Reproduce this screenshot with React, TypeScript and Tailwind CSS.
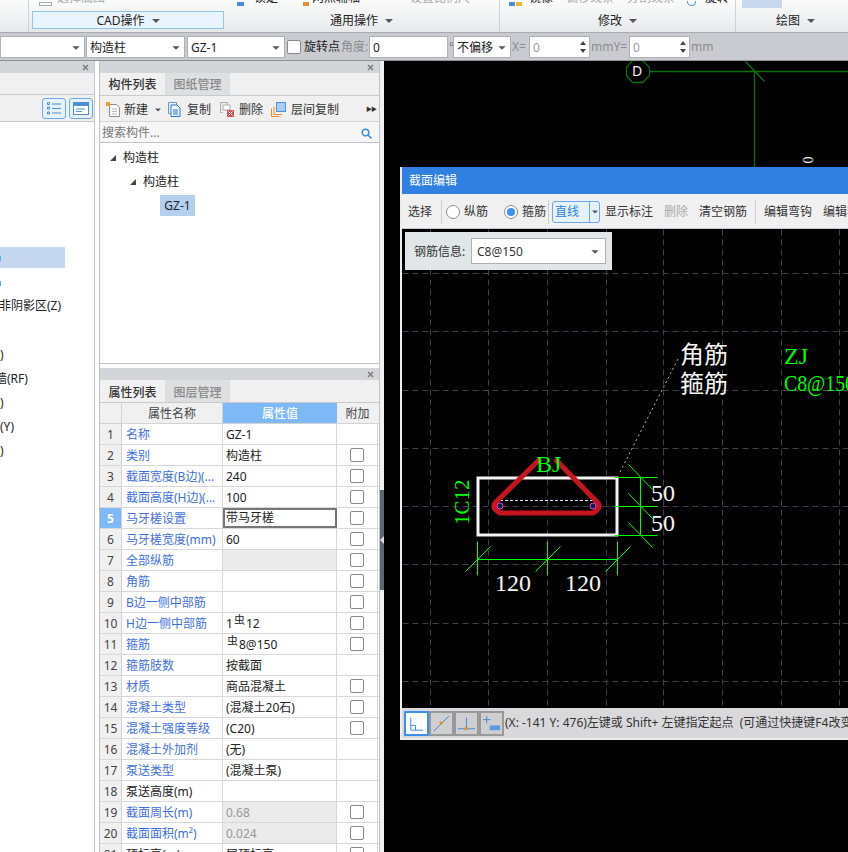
import type { ReactNode } from 'react'

const sans = "[font-family:'Noto_Sans','Noto_Sans_CJK_SC',sans-serif]"

const rows: { name: string; value?: ReactNode; check?: boolean; gray?: boolean; grayText?: boolean; black?: boolean }[] = [
  { name: '名称', value: 'GZ-1' },
  { name: '类别', value: '构造柱', check: true },
  { name: '截面宽度(B边)(...', value: '240', check: true },
  { name: '截面高度(H边)(...', value: '100', check: true },
  { name: '马牙槎设置', value: '带马牙槎', check: true },
  { name: '马牙槎宽度(mm)', value: '60', check: true },
  { name: '全部纵筋', gray: true, check: true },
  { name: '角筋', check: true },
  { name: 'B边一侧中部筋', check: true },
  { name: 'H边一侧中部筋', value: <>1 <Rebar />12</>, check: true },
  { name: '箍筋', value: <><Rebar />8@150</>, check: true },
  { name: '箍筋肢数', value: '按截面' },
  { name: '材质', value: '商品混凝土', check: true },
  { name: '混凝土类型', value: '(混凝土20石)', check: true },
  { name: '混凝土强度等级', value: '(C20)', check: true },
  { name: '混凝土外加剂', value: '(无)' },
  { name: '泵送类型', value: '(混凝土泵)' },
  { name: '泵送高度(m)', black: true },
  { name: '截面周长(m)', value: '0.68', gray: true, grayText: true, check: true },
  { name: '截面面积(m²)', value: '0.024', gray: true, grayText: true, check: true },
  { name: '顶标高(m)', value: '层顶标高', check: true, black: true },
]

function Rebar() {
  return <span className="relative top-[-3px] mx-[1px] text-[11px]">虫</span>
}

function Caret({ className = '' }: { className?: string }) {
  return <span className={`inline-block h-0 w-0 border-x-[4px] border-t-[4px] border-x-transparent border-t-[#555] ${className}`} />
}

function CloseX() {
  return (
    <svg width="7" height="7" viewBox="0 0 7 7" className="shrink-0">
      <path d="M1 1l5 5M6 1L1 6" stroke="#7d8085" strokeWidth="1.6" />
    </svg>
  )
}

function RibbonLabel({ text }: { text: string }) {
  return (
    <span className="flex items-center gap-[7px] pt-[2px] text-[12px] leading-[16px] text-[#222]">
      {text}
      <Caret />
    </span>
  )
}

function Ribbon() {
  const clip = 'flex h-[6px] items-end overflow-hidden text-[12px] leading-[16px] whitespace-nowrap'
  return (
    <div className="flex h-[33px] shrink-0 border-b border-[#a9acb1] bg-gradient-to-b from-[#fbfbfb] to-[#e7e9eb]">
      <div className="w-[29px] shrink-0 border-r border-[#cfd1d4]" />
      <div className="flex w-[195px] shrink-0 flex-col pl-[3px]">
        <div className={`${clip} pl-[7px] text-[#aaa]`}>
          <span className="mr-[5px] h-[4px] w-[13px] border border-[#aaa]" />选择底图
        </div>
        <div className="mt-[5px] flex h-[18px] items-center justify-center border border-[#8fc3f5] bg-[#e9f4fe]">
          <RibbonLabel text="CAD操作" />
        </div>
      </div>
      <div className="flex w-[276px] shrink-0 flex-col border-r border-[#cfd1d4]">
        <div className={`${clip} pl-[13px] text-[#222]`}>
          <span className="mr-[10px] h-[4px] w-[7px] bg-[#4a90d9]" />锁定
          <span className="mr-[3px] ml-[25px] h-[4px] w-[6px] bg-[#e98b3a]" />两点辅轴
          <span className="ml-[50px] text-[#aaa]">设置比例尺</span>
        </div>
        <div className="mt-[5px] flex h-[18px] items-center justify-center">
          <RibbonLabel text="通用操作" />
        </div>
      </div>
      <div className="flex w-[236px] shrink-0 flex-col border-r border-[#cfd1d4]">
        <div className={`${clip} pl-[9px] text-[#222]`}>
          <span className="h-[4px] w-[6px] bg-[#4a90d9]" />
          <span className="mr-[7px] ml-[1px] h-[4px] w-[6px] bg-[#f2b233]" />镜像
          <span className="ml-[13px] text-[#aaa]">偏移线条</span>
          <span className="ml-[13px] text-[#aaa]">分割线条</span>
          <span className="mr-[9px] ml-[12px] h-[5px] w-[9px] rounded-b-full border border-t-0 border-[#4a90d9]" />旋转
        </div>
        <div className="mt-[5px] flex h-[18px] items-center justify-center">
          <RibbonLabel text="修改" />
        </div>
      </div>
      <div className="flex flex-1 flex-col pl-[6px]">
        <div className="h-[8px] w-[40px] bg-[#c8d8ef]" />
        <div className="mt-[3px] flex h-[18px] items-center pl-[34px]">
          <RibbonLabel text="绘图" />
        </div>
      </div>
    </div>
  )
}

function Select({ text, className }: { text: string; className: string }) {
  return (
    <div className={`flex h-[22px] items-center justify-between border border-[#adb0b4] bg-white pt-[1px] pr-[4px] pl-[3px] ${className}`}>
      <span>{text}</span>
      <Caret className="scale-90" />
    </div>
  )
}

function Spin({ className }: { className: string }) {
  return (
    <div className={`flex h-[22px] items-center justify-between border border-[#adb0b4] bg-white pr-[3px] pl-[3px] text-[#999] ${className}`}>
      <span className="pt-[1px]">0</span>
      <span className="flex flex-col gap-[4px]">
        <span className="h-0 w-0 border-x-[3px] border-b-[4px] border-x-transparent border-b-[#444]" />
        <span className="h-0 w-0 border-x-[3px] border-t-[4px] border-x-transparent border-t-[#444]" />
      </span>
    </div>
  )
}

function OptionBar() {
  return (
    <div className="flex h-[28px] shrink-0 items-center border-b border-[#8f9297] bg-[#c9cbd0] pt-[1px] text-[12px] whitespace-nowrap text-[#222] *:shrink-0">
      <Select text="" className="w-[85px]" />
      <Select text="构造柱" className="ml-[1px] w-[99px]" />
      <Select text="GZ-1" className="ml-[2px] w-[98px]" />
      <span className="ml-[2px] h-[14px] w-[14px] rounded-[2px] border border-[#8a8a8a] bg-white" />
      <span className="ml-[3px] w-[37px]">旋转点</span>
      <span className="w-[28px] text-[#8b8d91]">角度:</span>
      <div className="ml-[0px] flex h-[22px] w-[79px] items-center border border-[#adb0b4] bg-white pt-[1px] pl-[3px]">0</div>
      <span className="ml-[1px] w-[4px] text-[#777]">°</span>
      <Select text="不偏移" className="w-[58px]" />
      <span className="ml-[1px] w-[16px] text-[#8b8d91]">X=</span>
      <Spin className="ml-[1px] w-[61px]" />
      <span className="ml-[1px] w-[36px] text-[#8b8d91]">mmY=</span>
      <Spin className="ml-[2px] w-[61px]" />
      <span className="ml-[1px] text-[#8b8d91]">mm</span>
    </div>
  )
}

function LeftPanel() {
  return (
    <div className="flex w-[99px] shrink-0 border-r-[4px] border-r-white bg-white text-[12px] text-[#222]">
      <div className="flex w-[95px] flex-col overflow-hidden border-r border-[#c6c7cb]">
        <div className="flex h-[12px] shrink-0 items-center justify-end bg-[#d3d5d9] pr-[5px]"><CloseX /></div>
        <div className="h-[22px] shrink-0 border-b border-[#c9cacd] bg-[#f0f0f0]" />
        <div className="flex h-[27px] shrink-0 items-center justify-end gap-[3px] border-b border-[#c9cacd] bg-[#f0f0f0] pr-[1px]">
          <div className="flex h-[21px] w-[24px] items-center justify-center rounded-[3px] border border-[#6aa9ea] bg-[#e6f1fc]">
            <svg width="14" height="13" viewBox="0 0 14 13" fill="none" stroke="#4a90d9">
              <path d="M5 2h9M5 6.500h9M5 11h9" />
              <path d="M.5.500h2v2h-2zM.5 5h2v2h-2zM.5 10h2v2h-2z" />
            </svg>
          </div>
          <div className="flex h-[21px] w-[24px] items-center justify-center rounded-[3px] border border-[#6aa9ea] bg-[#e6f1fc]">
            <svg width="16" height="13" viewBox="0 0 16 13">
              <rect x=".5" y=".5" width="15" height="12" fill="#fff" stroke="#4a90d9" />
              <rect x="0" y="0" width="16" height="4" fill="#4a90d9" />
              <path d="M3 7h9M3 9.500h6" stroke="#4a90d9" />
            </svg>
          </div>
        </div>
        <div className="relative flex-1 whitespace-nowrap">
          <div className="absolute top-[125px] left-0 h-[21px] w-[65px] bg-[#c5d8f0]" />
          <div className="absolute top-[134px] left-0 h-[5px] w-[1px] bg-[#4fb0f0]" />
          <div className="absolute top-[159px] left-0 h-[5px] w-[1px] bg-[#4fb0f0]" />
          <span className="absolute top-[176px] left-0 leading-[16px]"><span className="-ml-[1px]">非阴影区(Z)</span></span>
          <span className="absolute top-[225px] left-0 leading-[16px]">)</span>
          <span className="absolute top-[249px] left-0 leading-[16px]"><span className="-ml-[5px]">墙(RF)</span></span>
          <span className="absolute top-[273px] left-0 leading-[16px]">)</span>
          <span className="absolute top-[297px] left-0 leading-[16px]"><span>(Y)</span></span>
          <span className="absolute top-[321px] left-0 leading-[16px]">)</span>
        </div>
      </div>
    </div>
  )
}

function Tabs({ active, other, pad }: { active: string; other: string; pad: string }) {
  return (
    <div className="flex h-[23px] shrink-0 border-b border-[#c9cacd] bg-[#f0f0f0] text-[12px]">
      <span className={`flex w-[65px] items-center justify-center font-medium text-[#333] ${pad}`}>{active}</span>
      <span className={`flex w-[65px] items-center justify-center bg-[#dedfe0] font-medium text-[#8a8a8a] ${pad}`}>{other}</span>
    </div>
  )
}

function ToolIcon({ kind }: { kind: 'new' | 'copy' | 'del' | 'floor' }) {
  if (kind === 'new') {
    return (
      <svg width="15" height="15" viewBox="0 0 15 15" fill="none">
        <path d="M3.500 2.500h7l3 3v9h-10z" fill="#fafafa" stroke="#8d8d8d" />
        <path d="M6 7h5M6 9.500h5M6 12h5" stroke="#bbb" />
        <rect x="0" y="0" width="4" height="4" fill="#f0a020" />
      </svg>
    )
  }
  if (kind === 'copy') {
    return (
      <svg width="13" height="15" viewBox="0 0 13 15" fill="none">
        <path d="M.5.500h8v3" stroke="#6b93c4" />
        <path d="M.5.500v11h2" stroke="#6b93c4" />
        <path d="M3 3h6l3 3v8.500H3z" fill="#eef5fc" stroke="#2a76c6" />
        <path d="M5 8h5M5 10h5M5 12h5" stroke="#2a76c6" />
      </svg>
    )
  }
  if (kind === 'del') {
    return (
      <svg width="14" height="15" viewBox="0 0 14 15" fill="none">
        <path d="M.5.500h7v2" stroke="#aaa" />
        <path d="M.5.500v10h2" stroke="#aaa" />
        <path d="M3 3h7v5H3z" fill="#fff" stroke="#aaa" />
        <rect x="7" y="8" width="7" height="7" fill="#d9534f" />
        <path d="M8.500 9.500l4 4M12.500 9.500l-4 4" stroke="#fff" />
      </svg>
    )
  }
  return (
    <svg width="15" height="15" viewBox="0 0 15 15" fill="none">
      <rect x="5.500" y=".5" width="9" height="9" fill="#a9cdf4" stroke="#4a90d9" />
      <path d="M3 4.500v8h8M.5 6.500v8h8" stroke="#f0882a" />
    </svg>
  )
}

function ListPanel() {
  return (
    <div className="flex h-[303px] shrink-0 flex-col border-b border-[#c0c1c4]">
      <div className="flex h-[12px] shrink-0 items-center justify-end bg-[#d3d5d9] pr-[5px]"><CloseX /></div>
      <Tabs active="构件列表" other="图纸管理" pad="pt-[1px]" />
      <div className="flex h-[26px] shrink-0 items-center border-b border-[#d6d6d8] bg-[#f0f0f0] pt-[2px] pl-[6px] text-[12px] text-[#333]">
        <ToolIcon kind="new" />
        <span className="ml-[3px]">新建</span>
        <Caret className="ml-[6px] scale-75" />
        <span className="ml-[6px] flex"><ToolIcon kind="copy" /></span>
        <span className="ml-[6px]">复制</span>
        <span className="ml-[9px] flex"><ToolIcon kind="del" /></span>
        <span className="ml-[5px]">删除</span>
        <span className="ml-[8px] flex"><ToolIcon kind="floor" /></span>
        <span className="ml-[5px]">层间复制</span>
        <span className="mr-[3px] ml-auto text-[6px] tracking-[-1px] text-[#333]">▶▶</span>
      </div>
      <div className="flex h-[21px] shrink-0 items-center justify-between border-b border-[#c0c1c4] bg-[#f6f6f6] pt-[2px] pr-[7px] pl-[2px] text-[12px] text-[#777]">
        <span>搜索构件...</span>
        <svg width="11" height="11" viewBox="0 0 11 11" fill="none" stroke="#3f93dc" strokeWidth="1.6">
          <circle cx="4.500" cy="4.500" r="3.300" />
          <path d="M7 7l3.500 3.500" />
        </svg>
      </div>
      <div className="flex flex-1 flex-col gap-[3px] bg-white pt-[4px] pl-[10px] text-[12px] text-[#222]">
        <div className="flex h-[21px] items-center gap-[7px]"><TreeArrow />构造柱</div>
        <div className="ml-[20px] flex h-[21px] items-center gap-[7px]"><TreeArrow />构造柱</div>
        <div className="ml-[50px] flex h-[21px] w-[35px] items-center justify-center bg-[#b5cfee]">GZ-1</div>
      </div>
    </div>
  )
}

function TreeArrow() {
  return <span className="h-0 w-0 border-b-[6px] border-l-[6px] border-b-[#444] border-l-transparent" />
}

function PropertyPanel() {
  return (
    <div className="mt-[4px] flex flex-1 flex-col overflow-hidden">
      <div className="flex h-[12px] shrink-0 items-center justify-end bg-[#d3d5d9] pr-[5px]"><CloseX /></div>
      <Tabs active="属性列表" other="图层管理" pad="pt-[3px]" />
      <div className="grid h-[21px] shrink-0 grid-cols-[22px_101px_114px_41px] border-b border-[#d3d3d3] bg-[#f0f0f0] text-[12px] text-[#444]">
        <span className="border-r border-[#d3d3d3]" />
        <span className="flex items-center justify-center border-r border-[#d3d3d3] pt-[1px]">属性名称</span>
        <span className="flex items-center justify-center bg-[#7fb8f7] pt-[1px] font-medium text-white">属性值</span>
        <span className="flex items-center justify-center pt-[1px]">附加</span>
      </div>
      {rows.map((r, i) => {
        const sel = i === 4
        return (
          <div key={r.name} className="grid h-[21px] shrink-0 grid-cols-[22px_101px_114px_41px] border-b border-[#d8d8d8] bg-white text-[12px]">
            <span className={`flex items-center justify-center border-r border-[#d3d3d3] pt-[1px] ${sel ? 'bg-[#7fb8f7] font-bold text-white' : 'bg-[#f0f0f0] text-[#444]'}`}>{i + 1}</span>
            <span className={`flex items-center overflow-hidden border-r border-[#d8d8d8] pt-[1px] pl-[4px] whitespace-nowrap ${r.black ? 'text-[#222]' : 'text-[#3f6fe0]'}`}>{r.name}</span>
            <span className={`flex items-center overflow-hidden whitespace-nowrap ${sel ? 'border-2 border-[#777] pl-[1px]' : 'border-r border-[#d8d8d8] pt-[1px] pl-[3px]'} ${r.gray ? 'bg-[#ebebeb]' : ''} ${r.grayText ? 'text-[#999]' : 'text-[#222]'}`}>{r.value}</span>
            <span className="flex items-center justify-center border-r border-[#d8d8d8]">
              {r.check && <span className="h-[14px] w-[14px] rounded-[2px] border border-[#8a8a8a] bg-white" />}
            </span>
          </div>
        )
      })}
    </div>
  )
}

function RightPanel() {
  return (
    <div className="flex w-[281px] shrink-0 flex-col border-x border-[#c0c1c4] bg-white">
      <ListPanel />
      <PropertyPanel />
    </div>
  )
}

function Splitter() {
  return (
    <div className="flex w-[4px] shrink-0 flex-col bg-[#f0f0f0]">
      <div className="mt-[429px] flex h-[100px] items-center bg-[#5c6670]">
        <span className="h-0 w-0 border-y-[4px] border-r-[4px] border-y-transparent border-r-[#ddd]" />
      </div>
    </div>
  )
}

function Radio({ on, text }: { on?: boolean; text: string }) {
  return (
    <span className="flex items-center gap-[4px]">
      <span className="flex h-[14px] w-[14px] shrink-0 items-center justify-center rounded-full border border-[#8a8a8a] bg-white">
        {on && <span className="h-[8px] w-[8px] rounded-full bg-[#3f8ef0]" />}
      </span>
      {text}
    </span>
  )
}

function StatusIcon({ n }: { n: number }) {
  return (
    <svg width="21" height="21" viewBox="0 0 22 22" fill="none" stroke="#3f86d8">
      {n === 0 && <path d="M5 5v13h13M5 13h5v5" />}
      {n === 1 && <><path d="M3 19L19 3" /><rect x="9" y="9" width="3" height="3" fill="#f08a24" stroke="none" /></>}
      {n === 2 && <><path d="M2 16.500h18M11 5v12" /><rect x="9" y="15" width="3" height="3" fill="#f08a24" stroke="none" /></>}
      {n === 3 && <><path d="M2 7h8M6 3v8" /><rect x="9" y="13" width="11" height="5" fill="#5b9ae0" stroke="none" /></>}
    </svg>
  )
}

function Section() {
  const vx = [430, 488, 547, 606, 663, 722, 781, 839]
  const hy = [274, 332, 391, 449, 507, 565, 624, 682]
  const green = '#00ff00'
  const serif = "'Liberation Serif','Noto Sans CJK SC',serif"
  return (
    <svg className="h-[478px] w-[446px] shrink-0" viewBox="402 230 446 478">
      <rect x="402" y="230" width="446" height="478" fill="#000" />
      <g stroke="#3c4048" strokeDasharray="6 4" transform="translate(.5 .5)">
        {vx.map(x => <path key={x} d={`M${x} 230V708`} />)}
        {hy.map(y => <path key={y} d={`M402 ${y}H848`} />)}
      </g>
      <path d="M620 473L678 360" stroke="#bbb" strokeDasharray="2 3" />
      <rect x="478" y="479" width="139" height="57" fill="none" stroke="#f4f4f4" strokeWidth="3" />
      <path d="M500 501.500H593" stroke="#dcdcff" strokeDasharray="3 2" />
      <path d="M540 460L496 503Q492 507 496 511L500 514H593L597 511Q601 507 597 503L555 460" fill="none" stroke="#c8141f" strokeWidth="5" />
      <circle cx="500" cy="507" r="3" fill="#102040" stroke="#e040e0" />
      <circle cx="593" cy="507" r="3" fill="#102040" stroke="#e040e0" />
      <g stroke={green} strokeWidth="1" transform="translate(.5 .5)">
        <path d="M477 560H617M477 542V576M547 542V576M617 542V576" />
        <path d="M465 572L490 547M535 572L560 547M605 572L630 547" />
        <path d="M640 478V536M614 478H657M614 507H657M614 536H657" />
        <path d="M628 465L652 490M628 494L652 519M628 523L652 548" />
      </g>
      <g fontFamily={serif} fontSize="24">
        <text x="536" y="473" fill={green}>BJ</text>
        <text x="495" y="592" fill="#f4f4f4">120</text>
        <text x="565" y="592" fill="#f4f4f4">120</text>
        <text x="651" y="502" fill="#f4f4f4">50</text>
        <text x="651" y="532" fill="#f4f4f4">50</text>
        <text x="469" y="526" fill={green} fontSize="21" transform="rotate(-90 469 526)">1C12</text>
        <text x="680" y="364" fill="#f4f4f4">角筋</text>
        <text x="680" y="393" fill="#f4f4f4">箍筋</text>
        <text x="784" y="365" fill={green}>ZJ</text>
        <text x="784" y="392" fill={green} textLength="71" lengthAdjust="spacingAndGlyphs">C8@150</text>
      </g>
    </svg>
  )
}

function Dialog() {
  return (
    <div className="absolute top-[106px] left-[16px] flex h-[573px] w-[448px] flex-col overflow-hidden border-b-[2px] border-l-[2px] border-[#ededed] bg-[#f0f0f0] text-[12px] text-[#333]">
      <div className="flex h-[27px] shrink-0 items-center bg-[#2f80e0] pt-[1px] pl-[7px] text-white">截面编辑</div>
      <div className="flex h-[35px] shrink-0 items-center border-b border-[#c9cacd] pt-[2px] pl-[6px] whitespace-nowrap *:shrink-0">
        <span className="w-[33px]">选择</span>
        <span className="h-[24px] border-l border-[#cfcfcf]" />
        <span className="ml-[4px] w-[58px]"><Radio text="纵筋" /></span>
        <span className="w-[44px]"><Radio on text="箍筋" /></span>
        <span className="h-[24px] border-l border-[#cfcfcf]" />
        <span className="ml-[3px] flex h-[22px] w-[48px] rounded-[3px] border border-[#6aa9ea] bg-[#e6f1fc]">
          <span className="flex w-[36px] items-center pl-[2px] text-[#2f80e0]">直线</span>
          <span className="flex flex-1 items-center justify-center border-l border-[#6aa9ea]"><Caret className="scale-75" /></span>
        </span>
        <span className="ml-[5px] w-[59px]">显示标注</span>
        <span className="w-[35px] text-[#aaa]">删除</span>
        <span className="w-[56px]">清空钢筋</span>
        <span className="h-[24px] border-l border-[#cfcfcf]" />
        <span className="ml-[8px] w-[59px]">编辑弯钩</span>
        <span>编辑箍筋</span>
      </div>
      <div className="relative flex-1 overflow-hidden bg-black">
        <Section />
        <div className="absolute top-[3px] left-[3px] flex h-[38px] w-[207px] items-center bg-[#e1e6e8] pl-[9px]">
          <span className="w-[57px] pt-[1px]">钢筋信息:</span>
          <div className="flex h-[26px] w-[135px] items-center justify-between border border-[#adb0b4] bg-white pt-[1px] pr-[6px] pl-[5px]">
            C8@150<Caret className="scale-90" />
          </div>
        </div>
      </div>
      <div className="flex h-[30px] shrink-0 items-center bg-[#d9d9dc] pl-[2px] whitespace-nowrap *:shrink-0">
        {[0, 1, 2, 3].map(n => (
          <span key={n} className={`flex h-[25px] w-[25px] items-center justify-center border-2 ${n === 0 ? 'border-[#3f8ef0] bg-white' : 'border-[#999] bg-[#cfcfd2]'}`}>
            <StatusIcon n={n} />
          </span>
        ))}
        <span className="ml-[1px]">(X: -141 Y: 476)左键或 Shift+ 左键指定起点&nbsp;&nbsp;(可通过快捷键F4改变插入点)</span>
      </div>
    </div>
  )
}

function Canvas() {
  return (
    <div className="relative flex-1 overflow-hidden bg-black">
      <svg className="h-[106px] w-full" viewBox="384 61 464 106">
        <g stroke="#0b6f0b" fill="none" strokeWidth="1.300" transform="translate(.5 .5)">
          <path d="M642 60L649 67V75L642 82H632L626 75V67L632 60" />
          <path d="M649 71H848M754 71V167M745 61L764 81" />
        </g>
        <text x="637" y="76" fill="#f4f4f4" fontSize="14" textAnchor="middle" fontFamily="'Noto Sans',sans-serif">D</text>
        <text x="807" y="160" fill="#f4f4f4" fontSize="14" textAnchor="middle" dominantBaseline="central" transform="rotate(90 807 160)" fontFamily="'Liberation Serif',serif">0</text>
      </svg>
      <Dialog />
    </div>
  )
}

export default function App() {
  return (
    <div className={`flex h-[852px] w-[848px] flex-col overflow-hidden bg-black ${sans}`}>
      <Ribbon />
      <OptionBar />
      <div className="flex min-h-0 flex-1">
        <LeftPanel />
        <RightPanel />
        <Splitter />
        <Canvas />
      </div>
    </div>
  )
}
